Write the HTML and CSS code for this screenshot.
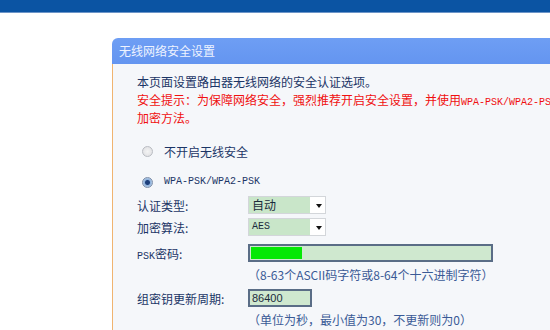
FILE: index.html
```html
<!DOCTYPE html>
<html lang="zh-CN">

<head>
    <meta charset="UTF-8">
    <title>无线网络安全设置</title>
    <link rel="stylesheet" href="styles.css">
</head>

<body>
    <div class="topbar"></div>

    <div class="panel">
        <div class="panel-title">无线网络安全设置</div>
        <div class="panel-body">
            <p class="intro">本页面设置路由器无线网络的安全认证选项。</p>
            <p class="warn">安全提示：为保障网络安全，强烈推荐开启安全设置，并使用<span class="mono">WPA-PSK/WPA2-PSK AES</span><br>加密方法。</p>

            <div class="radio-row first">
                <span class="radio"></span>
                <span>不开启无线安全</span>
            </div>
            <div class="radio-row">
                <span class="radio checked"></span>
                <span class="mono dark">WPA-PSK/WPA2-PSK</span>
            </div>

            <div class="row sel-row">
                <span class="label">认证类型:</span>
                <span class="select"><span class="val">自动</span><span class="arrow"></span></span>
            </div>
            <div class="row sel-row">
                <span class="label">加密算法:</span>
                <span class="select"><span class="val mono dark">AES</span><span class="arrow"></span></span>
            </div>

            <div class="row psk-row">
                <span class="label"><span class="mono">PSK</span>密码:</span>
                <span class="input wide"><span class="mask" style="width: 51px"></span></span>
            </div>
            <div class="hint">（8-63个ASCII码字符或8-64个十六进制字符）</div>

            <div class="row">
                <span class="label">组密钥更新周期:</span>
                <span class="input short">86400</span>
            </div>
            <div class="hint">（单位为秒，最小值为30，不更新则为0）</div>
        </div>
    </div>
</body>

</html>
```

FILE: styles.css
```css
* {
    margin: 0;
    padding: 0;
}

html,
body {
    width: 550px;
    height: 330px;
    overflow: hidden;
    background: #fff;
}

body {
    font-family: "Noto Sans CJK SC", "Noto Sans", sans-serif;
    font-size: 12px;
    color: #1b3566;
}

.topbar {
    height: 12px;
    background: #0b54a3;
    border-bottom: 1px solid #6d95c8;
}

.panel {
    width: 700px;
    margin: 25px 0 0 112px;
}

.panel-title {
    height: 26px;
    line-height: 25px;
    padding-left: 7px;
    color: #eef3ff;
    background: linear-gradient(#6e9ef4, #6495f0);
    border-top-left-radius: 6px;
}

.panel-body {
    height: 300px;
    padding: 9px 0 0 24px;
    background: #f5f7fa;
    border-left: 1px solid #f0b470;
}

.intro,
.warn {
    line-height: 18px;
}

.warn {
    color: #f01010;
}

.mono {
    font-family: "Liberation Mono", monospace;
    font-size: 10px;
    line-height: 1;
}

.dark {
    color: #1b3566;
}

.radio-row {
    display: flex;
    align-items: center;
    height: 20px;
    margin-top: 11px;
    padding-left: 5px;
}

.radio-row.first {
    margin-top: 14px;
}

.radio {
    width: 11px;
    height: 11px;
    margin-right: 11px;
    border-radius: 50%;
    border: 1px solid #b9bcc2;
    background: radial-gradient(circle, #f4f4f4 0, #dcdde0 100%);
    box-sizing: border-box;
}

.radio.checked {
    border-color: #7d8ea8;
    background: radial-gradient(circle, #1c3e7a 0, #1c3e7a 2px, #8fb2dc 3px, #d6e2f0 100%);
}

.row {
    display: flex;
    align-items: center;
    height: 18px;
    margin-top: 4px;
}

.sel-row:first-of-type {
    margin-top: 3px;
}

.label {
    width: 111px;
    flex: none;
}

.select {
    display: flex;
    width: 78px;
    height: 18px;
    border: 1px solid #d3d6da;
    box-sizing: border-box;
    background: #fff;
}

.select .val {
    width: 58px;
    line-height: 16px;
    padding-left: 3px;
    background: #c9e6c9;
    color: #1b2b3c;
}

.select .arrow {
    flex: 1;
    position: relative;
}

.select .arrow::after {
    content: "";
    position: absolute;
    left: 6px;
    top: 7px;
    border-left: 3px solid transparent;
    border-right: 3px solid transparent;
    border-top: 4px solid #111;
}

.psk-row {
    margin-top: 8px;
}

.input {
    height: 18px;
    box-sizing: border-box;
    border: 2px solid #5a6d86;
    background: #cfe8cf;
}

.input.wide {
    width: 245px;
    padding: 1px;
}

.mask {
    display: block;
    height: 12px;
    background: #05e805;
}

.input.short {
    width: 64px;
    padding-left: 2px;
    line-height: 14px;
    font-family: "Liberation Sans", sans-serif;
    font-size: 11px;
    color: #1b2b3c;
}

.hint {
    height: 18px;
    line-height: 18px;
    margin: 4px 0 5px 111px;
    color: #3a5a96;
}
```
